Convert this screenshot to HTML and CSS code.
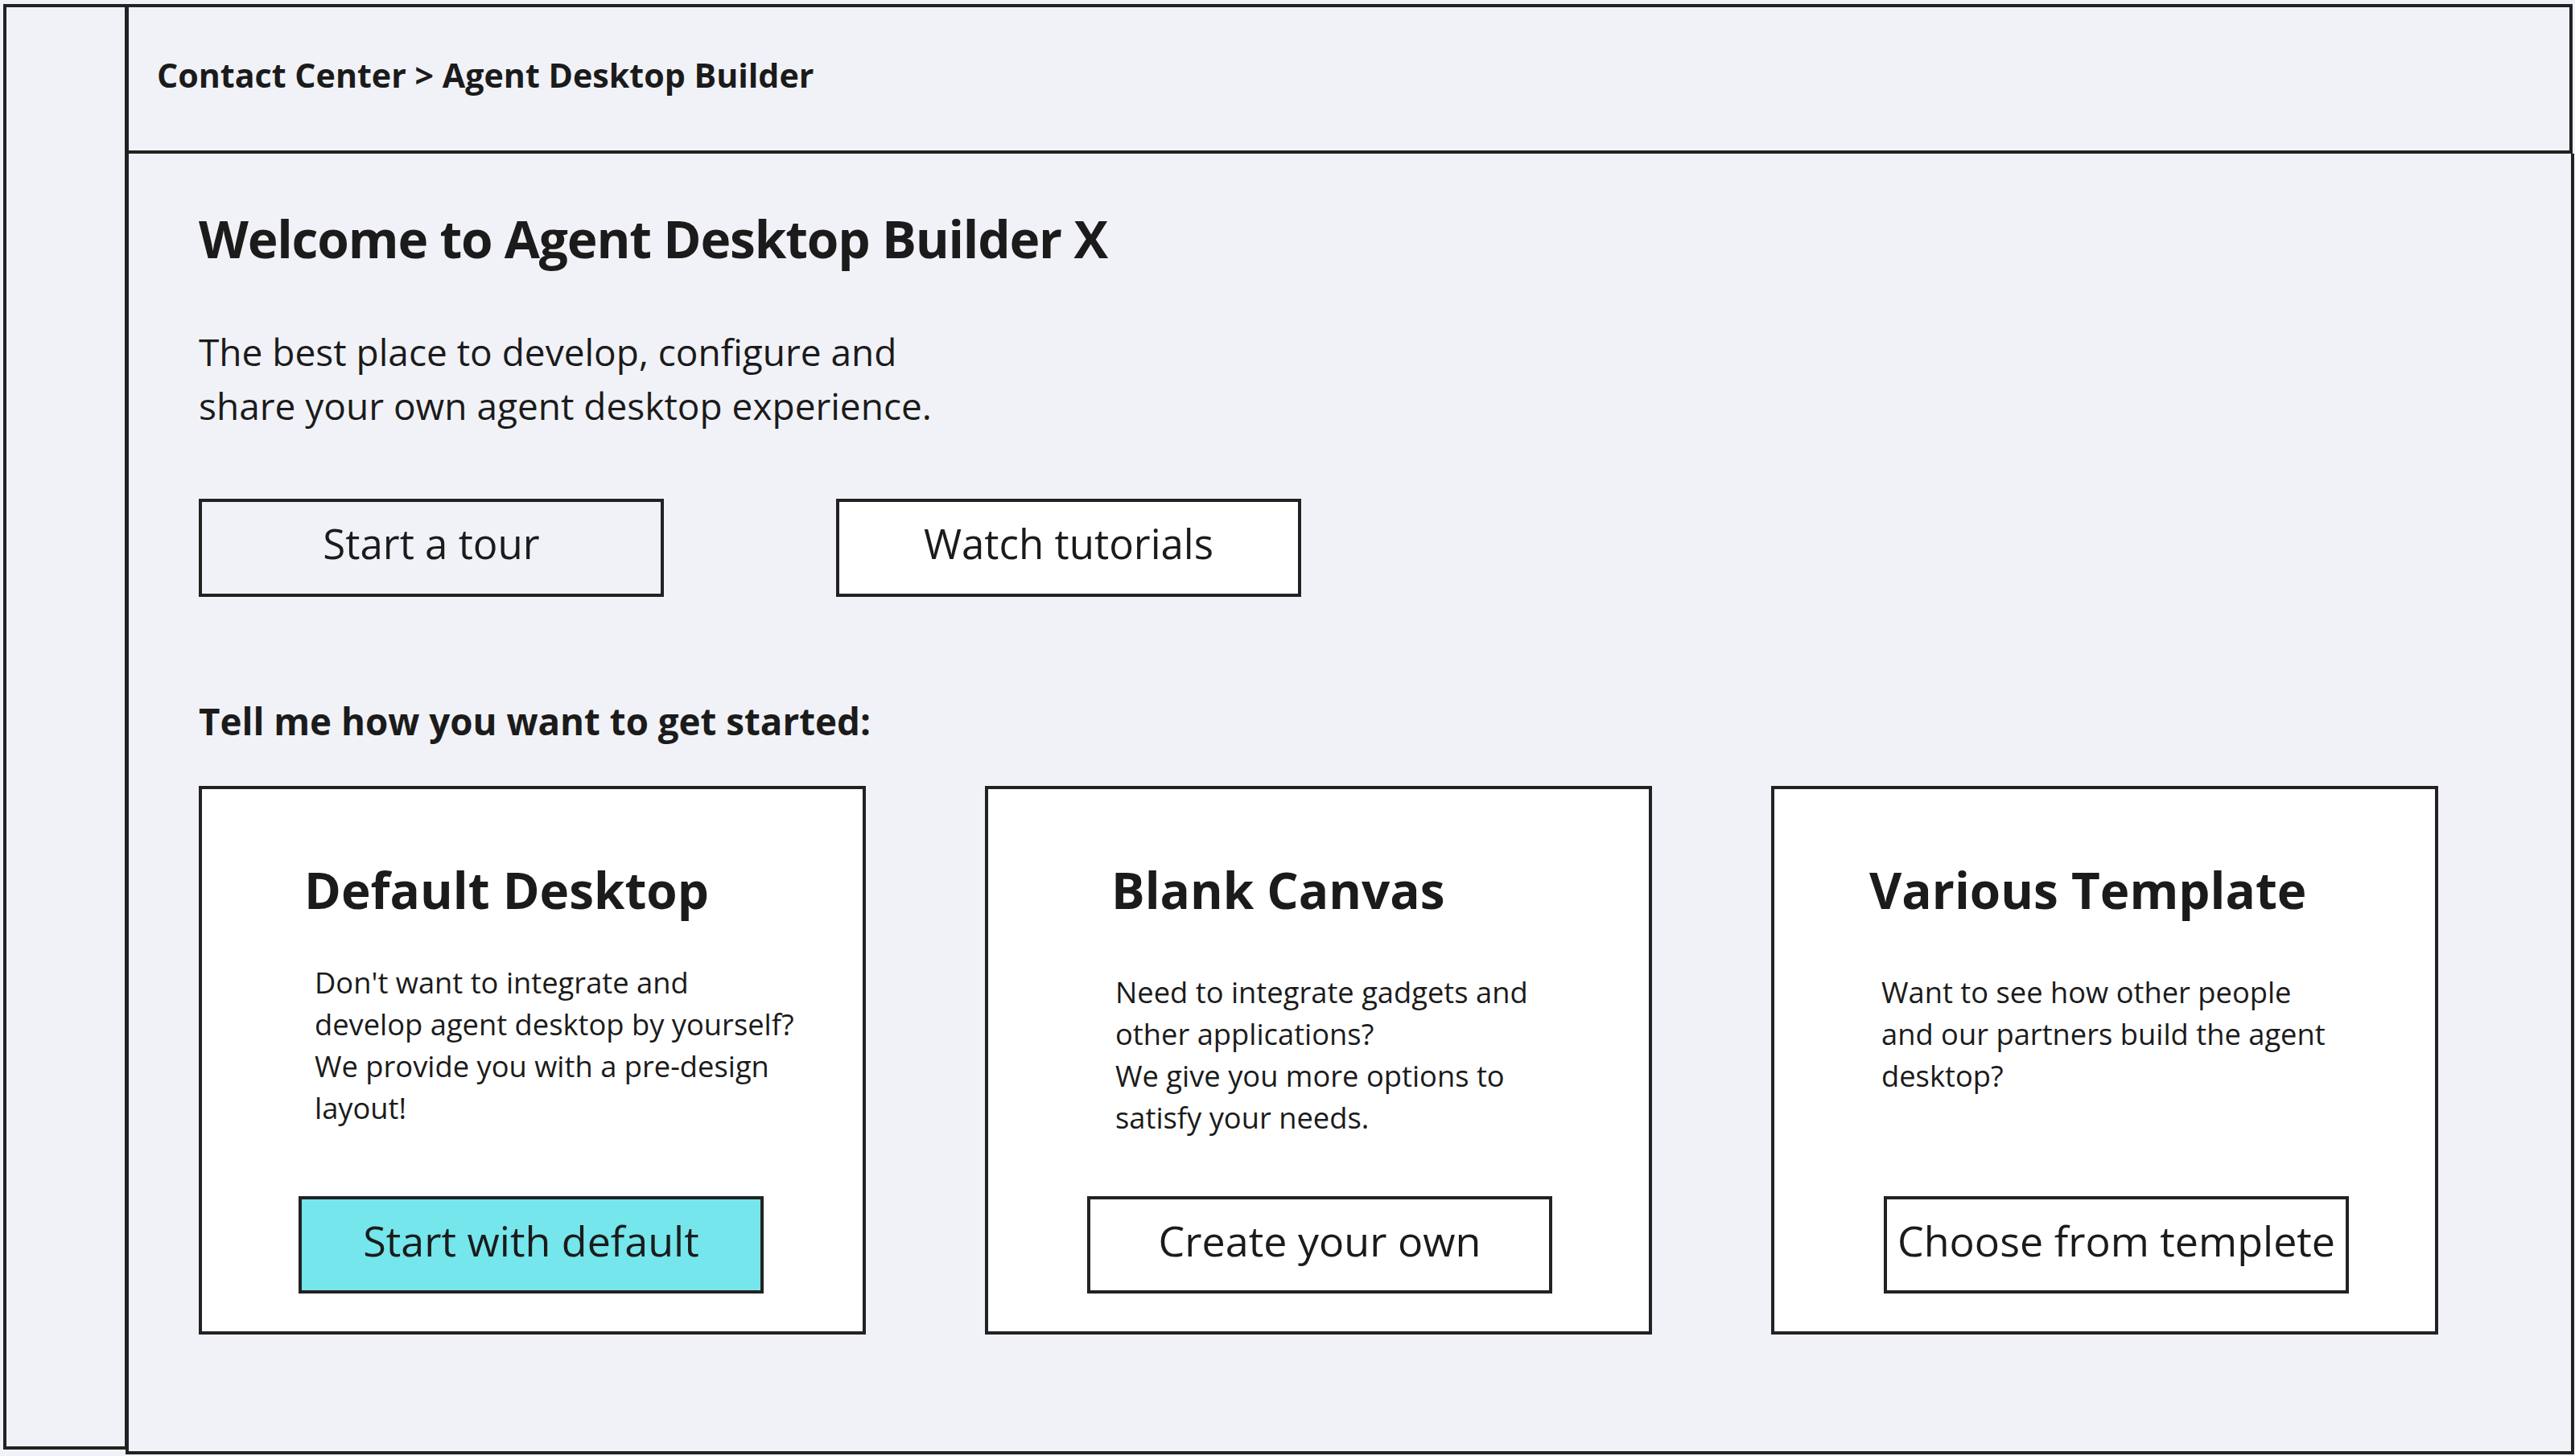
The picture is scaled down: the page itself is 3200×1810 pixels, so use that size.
FILE: index.html
```html
<!DOCTYPE html>
<html lang="en">
<head>
<meta charset="utf-8">
<title>Agent Desktop Builder</title>
<link rel="stylesheet" href="styles.css">
</head>
<body>
<div class="frame">
  <aside class="sidebar"></aside>
  <div class="column">
    <header class="topbar">
      <div class="crumbs">Contact Center &gt; Agent Desktop Builder</div>
    </header>
    <main class="main">
      <h1 class="title">Welcome to Agent Desktop Builder X</h1>
      <p class="intro">The best place to develop, configure and<br>share your own agent desktop experience.</p>
      <div class="actions">
        <button class="btn">Start a tour</button>
        <button class="btn btn--white">Watch tutorials</button>
      </div>
      <h2 class="prompt">Tell me how you want to get started:</h2>
      <div class="cards">
        <section class="card card--default">
          <h3 class="card-title">Default Desktop</h3>
          <p class="card-text">Don't want to integrate and<br>develop agent desktop by yourself?<br>We provide you with a pre-design<br>layout!</p>
          <button class="btn btn--cyan card-btn">Start with default</button>
        </section>
        <section class="card card--blank">
          <h3 class="card-title">Blank Canvas</h3>
          <p class="card-text">Need to integrate gadgets and<br>other applications?<br>We give you more options to<br>satisfy your needs.</p>
          <button class="btn btn--white card-btn">Create your own</button>
        </section>
        <section class="card card--template">
          <h3 class="card-title">Various Template</h3>
          <p class="card-text">Want to see how other people<br>and our partners build the agent<br>desktop?</p>
          <button class="btn btn--white card-btn">Choose from templete</button>
        </section>
      </div>
    </main>
  </div>
</div>
</body>
</html>
```

FILE: styles.css
```css
* {
  box-sizing: border-box;
}

html, body {
  margin: 0;
  padding: 0;
}

body {
  background: #f1f2f7;
  color: #1b1b1b;
  font-family: "Open Sans", "Noto Sans", sans-serif;
  width: 3200px;
  height: 1810px;
  overflow: hidden;
}

.frame {
  display: flex;
  align-items: flex-start;
  padding: 5px 3px 0 4px;
}

.sidebar {
  flex: 0 0 155px;
  height: 1797px;
  border: 4px solid #222;
  background: #f1f2f7;
}

.column {
  flex: 1;
  margin-left: -3px;
  display: flex;
  flex-direction: column;
}

.topbar {
  height: 186px;
  border: 4px solid #222;
  display: flex;
  align-items: center;
  padding: 0 0 10px 35px;
  background: #f1f2f7;
}

.crumbs {
  font-size: 41.2px;
  font-weight: 700;
  line-height: 57px;
  white-space: nowrap;
}

.main {
  height: 1617px;
  border: 4px solid #222;
  border-top: none;
  margin-right: -2px;
  padding: 66px 0 0 87px;
  background: #f1f2f7;
}

.title {
  margin: 0;
  font-size: 64px;
  letter-spacing: -1.2px;
  line-height: 79px;
  font-weight: 700;
  white-space: nowrap;
}

.intro {
  margin: 68px 0 0;
  font-size: 46px;
  line-height: 67px;
  font-weight: 400;
  white-space: nowrap;
}

.actions {
  display: flex;
  gap: 214px;
  margin-top: 82px;
}

.btn {
  width: 578px;
  height: 122px;
  border: 4px solid #222;
  background: transparent;
  color: #1b1b1b;
  font-family: "Open Sans", "Noto Sans", sans-serif;
  font-size: 51px;
  font-weight: 400;
  padding: 0 0 12px;
  margin: 0;
  display: flex;
  align-items: center;
  justify-content: center;
  white-space: nowrap;
  border-radius: 0;
}

.btn--white {
  background: #fff;
}

.btn--cyan {
  background: #75e6ec;
}

.prompt {
  margin: 124px 0 0;
  font-size: 45.7px;
  line-height: 60px;
  font-weight: 700;
  white-space: nowrap;
}

.cards {
  display: flex;
  gap: 148px;
  margin-top: 51px;
}

.card {
  width: 829px;
  height: 682px;
  border: 4px solid #222;
  background: #fff;
  display: flex;
  flex-direction: column;
  align-items: flex-start;
  padding: 88px 0 47px;
}

.card-title {
  margin: 0;
  font-size: 62px;
  line-height: 74px;
  font-weight: 700;
  white-space: nowrap;
}

.card-text {
  margin: 64px 0 0;
  font-size: 36.3px;
  line-height: 52px;
  font-weight: 400;
  white-space: nowrap;
}

.card-btn {
  margin-top: auto;
  height: 121px;
  font-size: 52px;
}

.card--default .card-title { padding-left: 127px; }
.card--default .card-text { margin-top: 52px; padding-left: 140px; }
.card--default .card-btn { margin-left: 120px; }

.card--blank .card-title { padding-left: 153px; }
.card--blank .card-text { padding-left: 158px; }
.card--blank .card-btn { margin-left: 123px; }

.card--template .card-title { padding-left: 118px; }
.card--template .card-text { padding-left: 133px; }
.card--template .card-btn { margin-left: 136px; }
```
